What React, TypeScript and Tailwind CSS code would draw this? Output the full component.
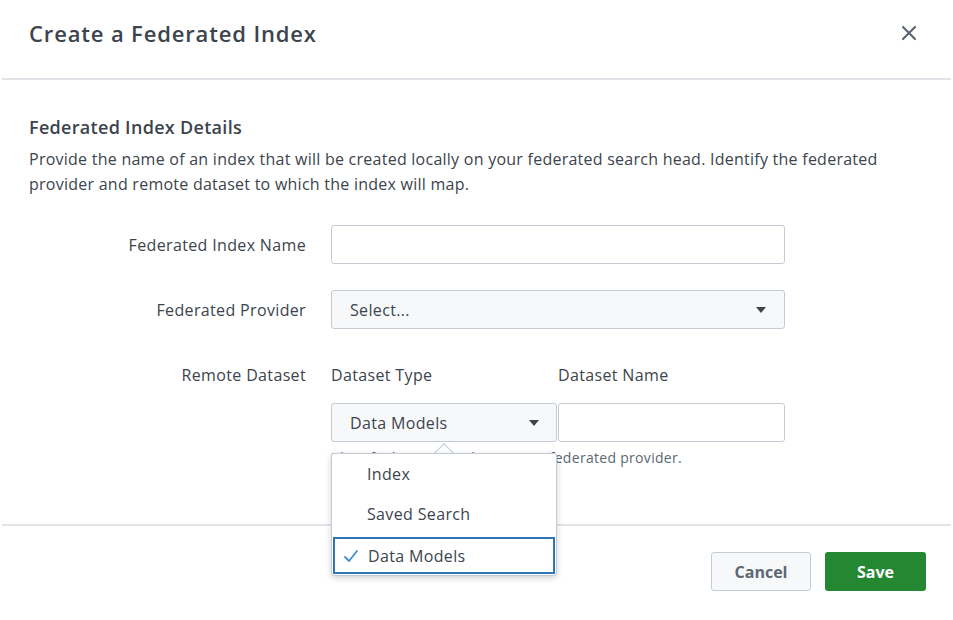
import React from "react";

const Caret = () => (
  <svg width="10" height="6" viewBox="0 0 10 6" className="shrink-0">
    <path d="M0 0 L10 0 L5 6 Z" fill="#3c444d" />
  </svg>
);

export default function App() {
  return (
    <div
      className="w-[953px] h-[620px] bg-white text-[#3c444d] overflow-hidden relative"
      style={{ fontFamily: '"Open Sans", "Liberation Sans", sans-serif' }}
    >
      {/* Header */}
      <div className="h-[78px] flex items-start justify-between pl-[29px] pr-[36px] pt-[18px]">
        <h1 className="text-[22px] leading-[30px] font-semibold tracking-[0.85px] text-[#3c444d]">Create a Federated Index</h1>
        <button className="mt-[7px] text-[#5c6773]" aria-label="Close">
          <svg width="16" height="16" viewBox="0 0 16 16">
            <path d="M2 2 L14 14 M14 2 L2 14" stroke="#5c6773" strokeWidth="2.2" strokeLinecap="round" />
          </svg>
        </button>
      </div>
      <div className="mx-[2px] h-[2px] bg-[#e1e4e8]" />

      {/* Body */}
      <div className="px-[29px] pt-[35px]">
        <h2 className="text-[18px] leading-[24px] font-semibold tracking-[0.3px]">Federated Index Details</h2>
        <p className="mt-[8px] text-[16px] leading-[25px] tracking-[0.25px] w-[890px]">
          Provide the name of an index that will be created locally on your federated search head. Identify the federated provider and remote dataset to which the index will map.
        </p>

        {/* Row 1 */}
        <div className="mt-[28px] flex items-center">
          <label className="w-[277px] text-right text-[16px] tracking-[0.35px]">Federated Index Name</label>
          <div className="ml-[25px] w-[454px] h-[39px] rounded-[3px] border border-[#c3cbd4] bg-white" />
        </div>

        {/* Row 2 */}
        <div className="mt-[26px] flex items-center">
          <label className="w-[277px] text-right text-[16px] tracking-[0.35px]">Federated Provider</label>
          <div className="ml-[25px] w-[454px] h-[39px] rounded-[3px] border border-[#c3cbd4] bg-[#f7f8fa] flex items-center justify-between pl-[18px] pr-[18px]">
            <span className="text-[16px] tracking-[0.35px] text-[#3c444d]">Select...</span>
            <Caret />
          </div>
        </div>

        {/* Row 3 */}
        <div className="mt-[34px] flex items-start">
          <label className="w-[277px] text-right text-[16px] tracking-[0.35px] leading-[24px]">Remote Dataset</label>
          <div className="ml-[25px] w-[454px]">
            <div className="flex">
              <div className="w-[227px] text-[16px] tracking-[0.35px] leading-[24px]">Dataset Type</div>
              <div className="text-[16px] tracking-[0.35px] leading-[24px]">Dataset Name</div>
            </div>
            <div className="mt-[16px] flex relative">
              <div className="w-[226px] h-[39px] rounded-[3px] border border-[#c3cbd4] bg-[#f7f8fa] flex items-center justify-between pl-[18px] pr-[17px]">
                <span className="text-[16px] tracking-[0.35px]">Data Models</span>
                <Caret />
              </div>
              <div className="ml-[1px] w-[227px] h-[39px] rounded-[3px] border border-[#c3cbd4] bg-white" />

              {/* Dropdown popup */}
              <div className="absolute left-0 top-[50px] w-[226px] z-10">
                <div className="absolute left-[106px] top-[-7px] w-[14px] h-[14px] rotate-45 bg-white border-l border-t border-[#c3cbd4]" />
                <div className="relative bg-white border border-[#c3cbd4] rounded-[3px] shadow-[0_2px_6px_rgba(0,0,0,0.18)] pb-[1px]">
                  <div className="h-[40px] flex items-center pl-[35px] text-[16px] tracking-[0.35px]">Index</div>
                  <div className="h-[40px] flex items-center pl-[35px] text-[16px] tracking-[0.35px]">Saved Search</div>
                  <div className="mt-[3px] mx-[1px] h-[37px] flex items-center border-2 border-[#2f74b5] pl-[8px] text-[16px] tracking-[0.35px]">
                    <svg width="16" height="14" viewBox="0 0 16 14" className="mr-[9px]">
                      <path d="M2 8 L6 12 L14 2" stroke="#3d8fd8" strokeWidth="1.8" fill="none" strokeLinecap="round" strokeLinejoin="round" />
                    </svg>
                    Data Models
                  </div>
                </div>
              </div>
            </div>
            <div className="mt-[8px] text-[14px] leading-[16px] tracking-[0.3px] text-[#5c6773] whitespace-nowrap">
              Identify the remote dataset in a federated provider.
            </div>
          </div>
        </div>
      </div>

      {/* Footer */}
      <div className="mt-[58px] mx-[2px] h-[2px] bg-[#e1e4e8]" />
      <div className="flex justify-end gap-[14px] pr-[27px] pt-[26px]">
        <button className="w-[100px] h-[39px] rounded-[3px] border border-[#c3cbd4] bg-[#f7f8fa] text-[16px] font-bold text-[#5c6773]">
          Cancel
        </button>
        <button className="w-[101px] h-[39px] rounded-[3px] bg-[#248833] text-[16px] font-bold text-white">
          Save
        </button>
      </div>
    </div>
  );
}
